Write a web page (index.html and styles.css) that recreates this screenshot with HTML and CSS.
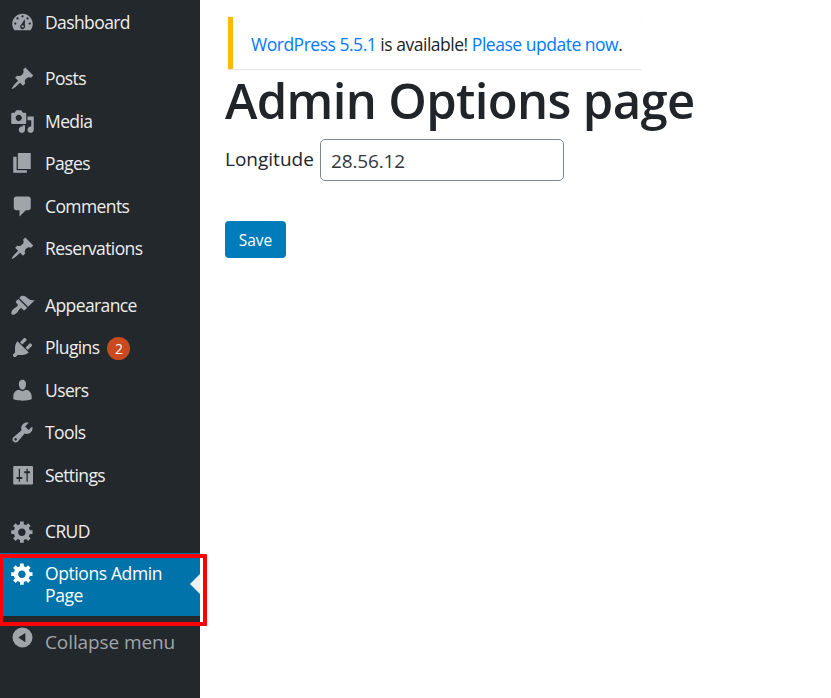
FILE: index.html
```html
<!DOCTYPE html>
<html lang="en">
<head>
<meta charset="utf-8">
<title>Admin Options page</title>
<link rel="stylesheet" href="styles.css">
</head>
<body>
<svg class="defs" aria-hidden="true">
  <symbol id="pin" viewBox="0 0 20 20"><path d="M10.44 3.02l1.82-1.82 6.36 6.35-1.83 1.82c-1.05-.68-2.48-.57-3.41.36l-.75.75c-.92.93-1.04 2.35-.35 3.41l-1.83 1.82-2.41-2.41-2.8 2.79c-.42.42-3.38 2.71-3.8 2.29s1.86-3.39 2.28-3.81l2.79-2.79L4.1 9.36l1.83-1.82c1.05.69 2.48.57 3.4-.36l.75-.75c.93-.92 1.05-2.35.36-3.41z"/></symbol>
  <symbol id="gear" viewBox="0 0 20 20"><path d="M18 12h-2.18c-.17.7-.44 1.35-.81 1.93l1.54 1.54-2.1 2.1-1.54-1.54c-.58.36-1.23.63-1.91.79V19H8v-2.18c-.68-.16-1.33-.43-1.91-.79l-1.54 1.54-2.12-2.12 1.54-1.54c-.36-.58-.63-1.23-.79-1.91H1V9.03h2.17c.16-.7.44-1.35.8-1.94L2.43 5.55l2.1-2.1 1.54 1.54c.58-.37 1.24-.64 1.93-.81V2h3v2.18c.68.16 1.33.43 1.91.79l1.54-1.54 2.12 2.12-1.54 1.54c.36.59.64 1.24.8 1.94H18V12zm-8.5 1.5c1.66 0 3-1.34 3-3s-1.34-3-3-3-3 1.34-3 3 1.34 3 3 3z"/></symbol>
</svg>
<div class="layout">
  <nav class="sidebar">
    <ul class="menu">
      <li class="item"><svg class="icon" viewBox="0 0 20 20"><path d="M3.56 16.2h12.88c1-1.37 1.76-3.11 1.76-5C18.2 6.6 14.5 2.9 10 2.9s-8.2 3.7-8.2 8.3c0 1.89.76 3.63 1.76 5z"/><g class="cut"><circle cx="10" cy="5" r=".9"/><circle cx="6" cy="6.7" r=".9"/><circle cx="14" cy="6.7" r=".9"/><circle cx="4.2" cy="10.8" r=".9"/><circle cx="15.8" cy="10.8" r=".9"/><path d="M11.8 7.2l.2 5.6a2 2 0 1 1-2.9-1.3z"/></g><circle cx="10.1" cy="13.1" r=".9"/></svg><span class="label">Dashboard</span></li>
      <li class="item gap"><svg class="icon"><use href="#pin"/></svg><span class="label">Posts</span></li>
      <li class="item"><svg class="icon" viewBox="0 0 20 20"><path d="M13 11V4c0-.55-.45-1-1-1h-1.67L9 1H5L3.67 3H2c-.55 0-1 .45-1 1v7c0 .55.45 1 1 1h10c.55 0 1-.45 1-1zM7 4.5c1.38 0 2.5 1.12 2.5 2.5S8.38 9.5 7 9.5 4.5 8.38 4.5 7 5.62 4.5 7 4.5zM14 6h5v10.5c0 1.38-1.12 2.5-2.5 2.5S14 17.88 14 16.5s1.12-2.5 2.5-2.5c.17 0 .34.02.5.05V9h-3V6zm-4 8.05V13h2v3.5c0 1.38-1.12 2.5-2.5 2.5S7 17.88 7 16.5 8.12 14 9.5 14c.17 0 .34.02.5.05z"/></svg><span class="label">Media</span></li>
      <li class="item"><svg class="icon" viewBox="0 0 20 20"><path d="M6.3 14.4V1.5h10.3v12.9H6.3zm-1 .9h8.2v2.1H2.6V4.5h2.7v10.8z"/></svg><span class="label">Pages</span></li>
      <li class="item"><svg class="icon" viewBox="0 0 20 20"><path d="M5 2h9.6c1.1 0 2 .9 2 2v7c0 1.1-.9 2-2 2h-2l-5 5v-5H5c-1.1 0-2-.9-2-2V4c0-1.1.9-2 2-2z"/></svg><span class="label">Comments</span></li>
      <li class="item"><svg class="icon"><use href="#pin"/></svg><span class="label">Reservations</span></li>
      <li class="item gap"><svg class="icon" viewBox="0 0 20 20"><path d="M14.48 11.06L7.41 3.99l1.5-1.5c.5-.56 2.3-.47 3.51.32 1.21.8 1.43 1.28 2.91 2.1 1.18.64 2.45 1.26 4.45.85zm-.71.71L6.7 4.7 4.93 6.47c-.39.39-.39 1.02 0 1.41l1.06 1.06c.39.39.39 1.03 0 1.42-.6.6-1.43 1.11-2.21 1.69-.35.26-.7.53-1.01.84C1.43 14.23.4 16.08 1.4 17.07c.99 1 2.84-.03 4.18-1.36.31-.31.58-.66.85-1.02.57-.78 1.08-1.61 1.69-2.21.39-.39 1.02-.39 1.41 0l1.06 1.06c.39.39 1.02.39 1.41 0z"/></svg><span class="label">Appearance</span></li>
      <li class="item"><svg class="icon" viewBox="0 0 20 20"><path d="M13.11 4.36L9.87 7.6 8 5.73l3.24-3.24c.35-.34 1.05-.2 1.56.32.52.51.66 1.21.31 1.55zm-8 1.77l.91-1.12 9.01 9.01-1.19.84c-.71.71-2.63 1.16-3.82 1.16H6.14L4.9 17.26c-.59.59-1.54.59-2.12 0-.59-.58-.59-1.53 0-2.12l1.24-1.24v-3.88c0-1.13.4-3.19 1.09-3.89zm7.26 3.97l3.24-3.24c.34-.35 1.04-.21 1.55.31.52.51.66 1.21.31 1.55l-3.24 3.25z"/></svg><span class="label">Plugins</span><span class="count">2</span></li>
      <li class="item"><svg class="icon" viewBox="0 0 20 20"><path d="M10 9.4c-2.27 0-2.83-3.8-2.83-3.8C6.9 3.4 7.82 1.4 9.97 1.4c2.16 0 3.08 2 2.81 4.2 0 0-.51 3.8-2.78 3.8zm0 1.2l2.72-1.3c2.39 0 4.62 2.83 4.62 5.03v2.69S13.59 18.15 10 18.15c-3.65 0-7.34-1.13-7.34-1.13v-2.69c0-2.25 2.04-5.03 4.57-5.03z"/></svg><span class="label">Users</span></li>
      <li class="item"><svg class="icon" viewBox="0 0 20 20"><path d="M16.68 9.77c-1.34 1.34-3.3 1.67-4.95.99l-5.41 6.52c-.99.99-2.59.99-3.58 0s-.99-2.59 0-3.57l6.52-5.42c-.68-1.65-.35-3.61.99-4.95 1.28-1.28 3.12-1.62 4.72-1.06l-2.89 2.89 2.82 2.82 2.86-2.87c.53 1.58.18 3.39-1.08 4.65zM3.81 16.21c.4.39 1.04.39 1.43 0 .4-.4.4-1.04 0-1.43-.39-.4-1.03-.4-1.43 0-.39.39-.39 1.03 0 1.43z"/></svg><span class="label">Tools</span></li>
      <li class="item"><svg class="icon" viewBox="0 0 20 20"><rect x="2.6" y="2.3" width="15.8" height="14.9" rx=".8"/><path class="cut" d="M7 4.6h1v6.5h1.8v1.7H8v2.1H7v-2.1H5.200v-1.700H7zM13.200 4.600h1v1.900H16v1.700h-1.800v6.700h-1V8.200h-1.800V6.500h1.800z"/></svg><span class="label">Settings</span></li>
      <li class="item gap"><svg class="icon"><use href="#gear"/></svg><span class="label">CRUD</span></li>
      <li class="item current"><svg class="icon"><use href="#gear"/></svg><span class="label">Options Admin<br>Page</span></li>
      <li class="item collapse"><svg class="icon" viewBox="0 0 20 20"><circle cx="10" cy="10" r="8"/><path class="cut" d="M12.3 6.3v7.4L6.6 10z"/></svg><span class="label">Collapse menu</span></li>
    </ul>
    <div class="highlight"></div>
  </nav>
  <main class="content">
    <div class="notice"><a>WordPress 5.5.1</a> is available! <a>Please update now</a>.</div>
    <h1 class="title">Admin Options page</h1>
    <form class="form">
      <div class="field"><label class="field-label" for="longitude">Longitude</label><input class="input" id="longitude" type="text" value="28.56.12"></div>
      <button class="save" type="button">Save</button>
    </form>
  </main>
</div>
</body>
</html>
```
FILE: styles.css
```css
* { box-sizing: border-box; }
body { margin: 0; background: #fff; color: #212529; font-family: "Open Sans", "Noto Sans", sans-serif; overflow: hidden; }
.defs { display: none; }
.layout { display: flex; height: 698px; }
.sidebar { position: relative; width: 200px; flex: none; background: #23282d; }
.menu { list-style: none; margin: 0; padding: 1.25px 0 0; }
.item { display: flex; align-items: flex-start; height: 42.5px; padding-left: 10px; color: #eee; font-size: 17.5px; line-height: 22px; letter-spacing: -0.6px; }
.gap { margin-top: 13.75px; }
.icon { width: 25px; height: 25px; margin: 8.75px 10px 0 0; flex: none; fill: #a0a5aa; }
.cut { fill: #23282d; }
.label { padding-top: 9.9px; white-space: nowrap; }
.count { width: 23px; height: 23px; margin: 11px 0 0 8px; border-radius: 50%; background: #ca4a1f; color: #fff; font-size: 14px; line-height: 23px; text-align: center; letter-spacing: 0; }
.current { position: relative; height: 63.75px; background: #0073aa; color: #fff; letter-spacing: -0.4px; }
.current .label { padding-top: 9.5px; }
.current .icon { fill: #fff; }
.current::after { content: ""; position: absolute; right: 0; top: 21.5px; border: 10px solid transparent; border-right-color: #f1f1f1; border-left: 0; }
.collapse { color: #a0a5aa; font-size: 19px; letter-spacing: -0.1px; }
.collapse .label { padding-top: 15px; }
.highlight { position: absolute; left: -1px; top: 554px; width: 208px; height: 72px; border: 4px solid #f00; border-radius: 1px; }
.content { flex: 1; padding: 17px 0 0 25px; }
.notice { width: 413px; height: 52px; margin-left: 3px; padding-left: 18px; border-left: 5px solid #ffb900; box-shadow: 0 1px 1px rgba(0,0,0,.1); font-size: 17.5px; line-height: 54px; letter-spacing: -0.48px; white-space: nowrap; }
.notice a { color: #007bff; }
.title { margin: 1px 0 0; font-size: 49px; line-height: 60px; font-weight: 600; letter-spacing: -0.65px; white-space: nowrap; }
.field { display: flex; align-items: flex-start; margin-top: 9px; }
.field-label { width: 95px; font-size: 19px; line-height: 40px; }
.input { width: 244px; height: 42px; padding: 2px 10px 0; border: 1px solid #7e8993; border-radius: 5px; background: #fff; color: #32373c; font: 19px "Open Sans", sans-serif; letter-spacing: -0.15px; }
.save { display: block; width: 61px; height: 37px; margin-top: 40px; padding: 0; border: 0; border-radius: 4px; background: #007cba; color: #fff; font: 15.5px "Open Sans", sans-serif; }
```
